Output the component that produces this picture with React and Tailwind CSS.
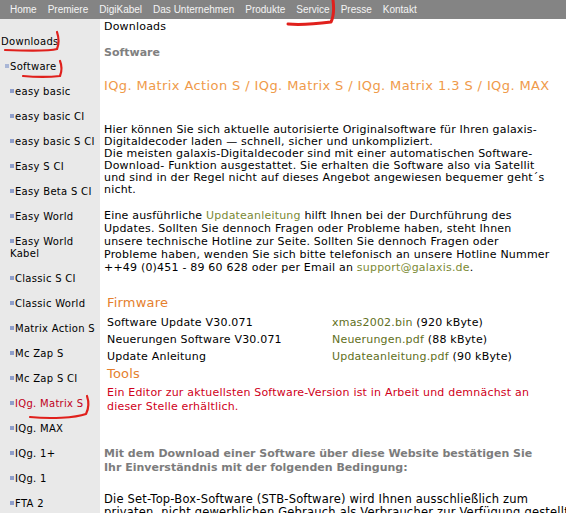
import React from "react";

const items = [
  "easy basic",
  "easy basic CI",
  "easy basic S CI",
  "Easy S CI",
  "Easy Beta S CI",
  "Easy World",
  ["Easy World", "Kabel"],
  "Classic S CI",
  "Classic World",
  "Matrix Action S",
  "Mc Zap S",
  "Mc Zap S CI",
  "IQg. Matrix S",
  "IQg. MAX",
  "IQg. 1+",
  "IQg. 1",
  "FTA 2",
];

const nav = ["Home", "Premiere", "DigiKabel", "Das Unternehmen", "Produkte", "Service", "Presse", "Kontakt"];

function Bullet({ className = "" }) {
  return <span className={"inline-block w-[4px] h-[4px] bg-[#8e9ecb] mr-[1px] translate-y-[-1px] shrink-0 " + className} />;
}

export default function App() {
  return (
    <div className="relative w-[566px] h-[513px] overflow-hidden bg-white text-black font-['DejaVu_Sans',sans-serif]">
      <nav className="h-[19px] bg-[#848484] flex items-center gap-[11px] pl-[10px] text-[10px] text-[#f4f4f4] font-['Liberation_Sans',Arial,sans-serif]">
        {nav.map((n) => (
          <span key={n} className="whitespace-nowrap">{n}</span>
        ))}
      </nav>
      <div className="flex h-[494px]">
        <aside className="w-[100px] shrink-0 bg-[#e9e9e9] pt-[17px] text-[10px] leading-[12px] tracking-[0.3px] flex flex-col gap-[13px]">
          <div className="pl-[1px] whitespace-nowrap">Downloads</div>
          <div className="pl-[5px] flex items-center whitespace-nowrap">
            <Bullet className="bg-[#a9b6d6]" />
            <span>Software</span>
          </div>
          {items.map((it, i) => {
            const label = Array.isArray(it) ? it : [it];
            const red = it === "IQg. Matrix S";
            return (
              <div key={i} className={"pl-[10px] whitespace-nowrap " + (red ? "text-[#c00020]" : "")}>
                <div className="flex items-center">
                  <Bullet />
                  <span>{label[0]}</span>
                </div>
                {label[1] && <div>{label[1]}</div>}
              </div>
            );
          })}
        </aside>
        <main className="flex-1 pl-[4px] pt-[1px] text-[11px] leading-[13px] whitespace-nowrap">
          <div className="text-[11px] leading-[13px] tracking-[0.2px]">Downloads</div>
          <div className="mt-[13px] font-bold text-[#808080]">Software</div>
          <div className="mt-[19px] text-[13px] leading-[16px] tracking-[0.4px] text-[#ef9a4a]">
            IQg. Matrix Action S / IQg. Matrix S / IQg. Matrix 1.3 S / IQg. MAX
          </div>
          <p className="mt-[30px] leading-[12px] tracking-[0.2px]">
            Hier können Sie sich aktuelle autorisierte Originalsoftware für Ihren galaxis-<br />
            Digitaldecoder laden — schnell, sicher und unkompliziert.<br />
            Die meisten galaxis-Digitaldecoder sind mit einer automatischen Software-<br />
            Download- Funktion ausgestattet. Sie erhalten die Software also via Satellit<br />
            und sind in der Regel nicht auf dieses Angebot angewiesen bequemer geht´s<br />
            nicht.
          </p>
          <p className="mt-[13px] tracking-[0.2px]">
            Eine ausführliche <span className="text-[#7b8a35]">Updateanleitung</span> hilft Ihnen bei der Durchführung des<br />
            Updates. Sollten Sie dennoch Fragen oder Probleme haben, steht Ihnen<br />
            unsere technische Hotline zur Seite. Sollten Sie dennoch Fragen oder<br />
            Probleme haben, wenden Sie sich bitte telefonisch an unsere Hotline Nummer<br />
            ++49 (0)451 - 89 60 628 oder per Email an <span className="text-[#7b8a35]">support@galaxis.de</span>.
          </p>
          <div className="pl-[3px] mt-[21px] tracking-[0.2px]">
            <div className="text-[13px] leading-[16px] text-[#e57f2e]">Firmware</div>
            <div className="grid grid-cols-[225px_1fr] auto-rows-[17px] items-center mt-[3px]">
              <div>Software Update V30.071</div>
              <div><span className="text-[#5f6f22]">xmas2002.bin</span> (920 kByte)</div>
              <div>Neuerungen Software V30.071</div>
              <div><span className="text-[#5f6f22]">Neuerungen.pdf</span> (88 kByte)</div>
              <div>Update Anleitung</div>
              <div><span className="text-[#5f6f22]">Updateanleitung.pdf</span> (90 kByte)</div>
            </div>
            <div className="text-[13px] leading-[16px] text-[#e57f2e] mt-[1px]">Tools</div>
            <p className="mt-[4px] text-[#d0001a] leading-[14px]">
              Ein Editor zur aktuellsten Software-Version ist in Arbeit und demnächst an<br />
              dieser Stelle erhältlich.
            </p>
          </div>
          <p className="mt-[33px] font-bold text-[#7c7c7c] leading-[14px]">
            Mit dem Download einer Software über diese Website bestätigen Sie<br />
            Ihr Einverständnis mit der folgenden Bedingung:
          </p>
          <p className="mt-[18px] text-[11.5px] leading-[13px] tracking-[0.2px]">
            Die Set-Top-Box-Software (STB-Software) wird Ihnen ausschließlich zum<br />
            privaten, nicht gewerblichen Gebrauch als Verbraucher zur Verfügung gestellt.
          </p>
        </main>
        <div className="w-[3px] shrink-0 flex flex-col">
          <div className="h-[272px] bg-black" />
          <div className="h-[20px] bg-[#d8d8d8]" />
        </div>
      </div>
      <svg className="absolute inset-0 pointer-events-none" width="566" height="513" viewBox="0 0 566 513" fill="none" stroke="#e0201c" strokeLinecap="round" strokeLinejoin="round">
        <path d="M57 32 C59 38 59 44 57 49 C50 51 30 51 5 50" strokeWidth="2.2" />
        <path d="M60 61 C62 66 62 71 60 76 C50 77 35 77 23 76" strokeWidth="2.2" />
        <path d="M333 0 C334 8 334 16 331 22 C315 24 300 25 288 24" strokeWidth="3" />
        <path d="M30 417 C50 419 75 418 86 414 C89 408 89 402 87 396" strokeWidth="2.2" />
      </svg>
    </div>
  );
}
